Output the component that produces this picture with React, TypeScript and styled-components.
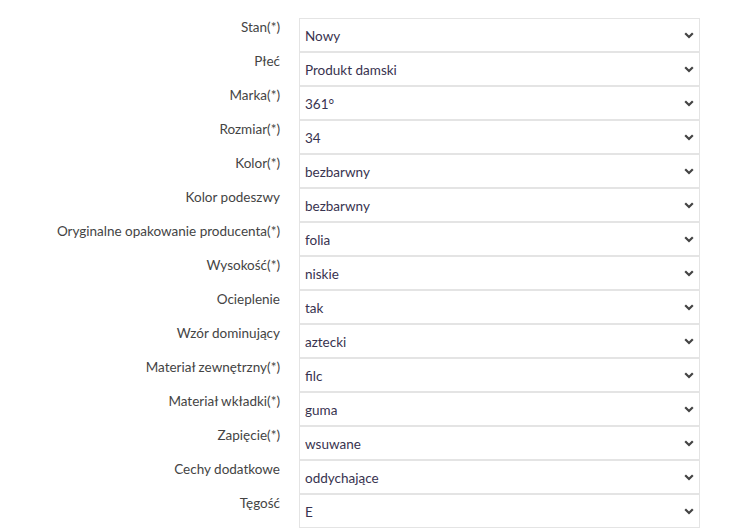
import React from "react";
import styled, { createGlobalStyle } from "styled-components";

const Global = createGlobalStyle`
  html, body { margin: 0; padding: 0; background: #fff; }
  body { font-family: "Source Sans Pro", Lato, "Noto Sans", sans-serif; }
`;

const Form = styled.div`
  display: grid;
  grid-template-columns: 280px 401px;
  column-gap: 19px;
  padding-top: 18px;
`;

const Label = styled.label`
  height: 34px;
  box-sizing: border-box;
  padding-top: 0px;
  text-align: right;
  font-size: 13.5px;
  line-height: 18px;
  color: #444;
  white-space: nowrap;
`;

const SelectWrap = styled.div`
  position: relative;
  height: 34px;
`;

const Select = styled.select`
  appearance: none;
  -webkit-appearance: none;
  width: 100%;
  height: 34px;
  box-sizing: border-box;
  border: 1px solid #e4e4e4;
  border-radius: 0;
  background: #fff;
  padding: 1px 24px 0 5px;
  margin: 0;
  font-family: inherit;
  font-size: 13.5px;
  color: #38334f;
  outline: none;
`;

const Chevron = styled.svg`
  position: absolute;
  right: 6px;
  top: 14px;
  width: 10px;
  height: 7px;
  pointer-events: none;
`;

const fields: [string, string][] = [
  ["Stan(*)", "Nowy"],
  ["Płeć", "Produkt damski"],
  ["Marka(*)", "361°"],
  ["Rozmiar(*)", "34"],
  ["Kolor(*)", "bezbarwny"],
  ["Kolor podeszwy", "bezbarwny"],
  ["Oryginalne opakowanie producenta(*)", "folia"],
  ["Wysokość(*)", "niskie"],
  ["Ocieplenie", "tak"],
  ["Wzór dominujący", "aztecki"],
  ["Materiał zewnętrzny(*)", "filc"],
  ["Materiał wkładki(*)", "guma"],
  ["Zapięcie(*)", "wsuwane"],
  ["Cechy dodatkowe", "oddychające"],
  ["Tęgość", "E"],
];

export default function App() {
  return (
    <>
      <Global />
      <Form>
        {fields.map(([label, value]) => (
          <React.Fragment key={label}>
            <Label>{label}</Label>
            <SelectWrap>
              <Select defaultValue={value}>
                <option value={value}>{value}</option>
              </Select>
              <Chevron viewBox="0 0 10 7">
                <path d="M1.2 1.2 L5 5 L8.8 1.2" fill="none" stroke="#444" strokeWidth="2.2" />
              </Chevron>
            </SelectWrap>
          </React.Fragment>
        ))}
      </Form>
    </>
  );
}
